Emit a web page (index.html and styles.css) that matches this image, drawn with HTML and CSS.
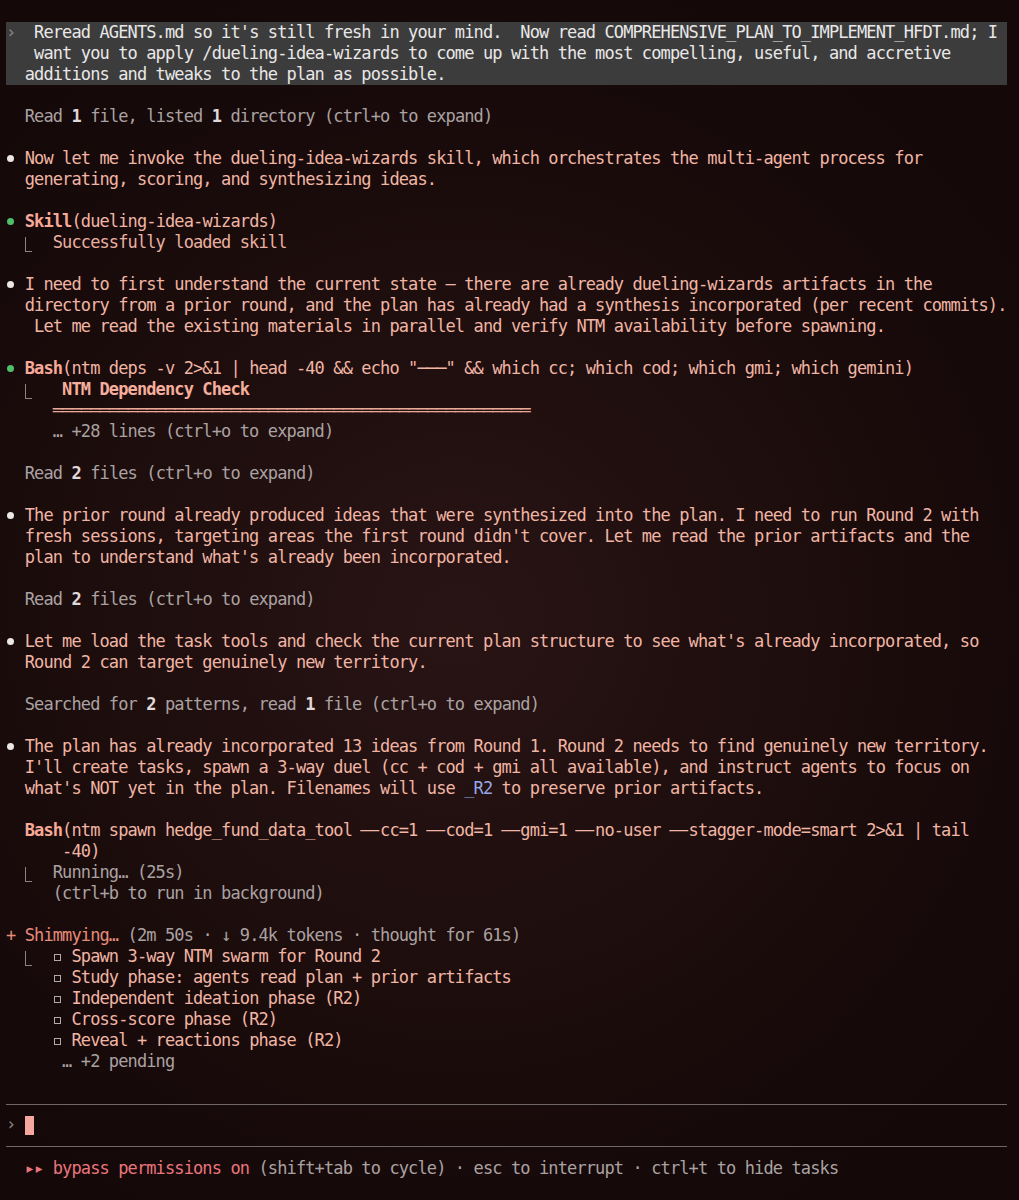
FILE: index.html
```html
<!DOCTYPE html>
<html lang="en">
<head>
<meta charset="utf-8">
<title>Terminal</title>
<link rel="stylesheet" href="styles.css">
</head>
<body>
<main class="term">
  <section class="user">
    <div class="row"><span class="prompt">›</span>  Reread AGENTS.md so it's still fresh in your mind.  Now read COMPREHENSIVE_PLAN_TO_IMPLEMENT_HFDT.md; I</div>
    <div class="row">   want you to apply /dueling-idea-wizards to come up with the most compelling, useful, and accretive</div>
    <div class="row">  additions and tweaks to the plan as possible.</div>
  </section>
  <div class="row"></div>
  <div class="row dim">  Read <b>1</b> file, listed <b>1</b> directory (ctrl+o to expand)</div>
  <div class="row"></div>
  <div class="row peach"><span class="dot"></span> Now let me invoke the dueling-idea-wizards skill, which orchestrates the multi-agent process for</div>
  <div class="row peach">  generating, scoring, and synthesizing ideas.</div>
  <div class="row"></div>
  <div class="row peach"><span class="dot ok"></span> <span class="tool">Skill</span>(dueling-idea-wizards)</div>
  <div class="row result">  <span class="corner"></span>  Successfully loaded skill</div>
  <div class="row"></div>
  <div class="row peach"><span class="dot"></span> I need to first understand the current state — there are already dueling-wizards artifacts in the</div>
  <div class="row peach">  directory from a prior round, and the plan has already had a synthesis incorporated (per recent commits).</div>
  <div class="row peach">   Let me read the existing materials in parallel and verify NTM availability before spawning.</div>
  <div class="row"></div>
  <div class="row peach"><span class="dot ok"></span> <span class="tool">Bash</span>(ntm deps -v 2&gt;&amp;1 | head -40 &amp;&amp; echo "───" &amp;&amp; which cc; which cod; which gmi; which gemini)</div>
  <div class="row result">  <span class="corner"></span>   <span class="heading">NTM Dependency Check</span></div>
  <div class="row result">     <span class="dbl">═══════════════════════════════════════════════════</span></div>
  <div class="row dim">     … +28 lines (ctrl+o to expand)</div>
  <div class="row"></div>
  <div class="row dim">  Read <b>2</b> files (ctrl+o to expand)</div>
  <div class="row"></div>
  <div class="row peach"><span class="dot"></span> The prior round already produced ideas that were synthesized into the plan. I need to run Round 2 with</div>
  <div class="row peach">  fresh sessions, targeting areas the first round didn't cover. Let me read the prior artifacts and the</div>
  <div class="row peach">  plan to understand what's already been incorporated.</div>
  <div class="row"></div>
  <div class="row dim">  Read <b>2</b> files (ctrl+o to expand)</div>
  <div class="row"></div>
  <div class="row peach"><span class="dot"></span> Let me load the task tools and check the current plan structure to see what's already incorporated, so</div>
  <div class="row peach">  Round 2 can target genuinely new territory.</div>
  <div class="row"></div>
  <div class="row dim">  Searched for <b>2</b> patterns, read <b>1</b> file (ctrl+o to expand)</div>
  <div class="row"></div>
  <div class="row peach"><span class="dot"></span> The plan has already incorporated 13 ideas from Round 1. Round 2 needs to find genuinely new territory.</div>
  <div class="row peach">  I'll create tasks, spawn a 3-way duel (cc + cod + gmi all available), and instruct agents to focus on</div>
  <div class="row peach">  what's NOT yet in the plan. Filenames will use <span class="blue">_R2</span> to preserve prior artifacts.</div>
  <div class="row"></div>
  <div class="row peach">  <span class="tool">Bash</span>(ntm spawn hedge_fund_data_tool <span class="lig">—</span>cc=1 <span class="lig">—</span>cod=1 <span class="lig">—</span>gmi=1 <span class="lig">—</span>no-user <span class="lig">—</span>stagger-mode=smart 2&gt;&amp;1 | tail</div>
  <div class="row peach">      -40)</div>
  <div class="row dim">  <span class="corner"></span>  Running… (25s)</div>
  <div class="row dim">     (ctrl+b to run in background)</div>
  <div class="row"></div>
  <div class="row dim"><span class="spin">+ Shimmying…</span> (2m 50s · ↓ 9.4k tokens · thought for 61s)</div>
  <div class="row peach">  <span class="corner"></span>  <span class="box"></span> Spawn 3-way NTM swarm for Round 2</div>
  <div class="row peach">     <span class="box"></span> Study phase: agents read plan + prior artifacts</div>
  <div class="row peach">     <span class="box"></span> Independent ideation phase (R2)</div>
  <div class="row peach">     <span class="box"></span> Cross-score phase (R2)</div>
  <div class="row peach">     <span class="box"></span> Reveal + reactions phase (R2)</div>
  <div class="row dim">      … +2 pending</div>
  <div class="row"></div>
  <div class="row rule"></div>
  <div class="row input"><span class="prompt">›</span> <span class="cursor"></span></div>
  <div class="row rule"></div>
  <div class="row dim bottom">  <span class="mode">▸▸ bypass permissions on</span> (shift+tab to cycle) · esc to interrupt · ctrl+t to hide tasks</div>
</main>
</body>
</html>
```
FILE: styles.css
```css
html, body {
  margin: 0;
  padding: 0;
}

body {
  width: 1019px;
  min-height: 1200px;
  background:
    radial-gradient(ellipse 65% 55% at 45% 52%, #291414 0%, #1d0d0d 55%, #140808 100%);
  background-color: #150909;
  font-family: "DejaVu Sans Mono", "Liberation Mono", monospace;
  font-size: 17px;
  letter-spacing: -0.884px;
  color: #f0b5a4;
}

.term {
  width: 1001px;
  padding: 22px 0 0 6px;
}

.row {
  height: 21px;
  line-height: 21px;
  white-space: pre;
}

.user {
  background: #3d3c3c;
  color: #e8e8e8;
}

.prompt {
  color: #8b8686;
}

.peach {
  color: #f0b5a4;
}

.result {
  color: #e9b0a1;
}

.dim {
  color: #aaa2a2;
}

.dim b {
  color: #e0d9d9;
  font-weight: bold;
}

.dot {
  display: inline-block;
  width: 7px;
  height: 7px;
  margin: 0 1.35px 0 1px;
  border-radius: 50%;
  background: #ebe7e7;
  vertical-align: 2px;
}

.dot.ok {
  background: #4fbf6a;
}

.tool {
  font-weight: bold;
  color: #f7a998;
}

.heading {
  font-weight: bold;
  color: #f5ae9c;
}

.corner {
  display: inline-block;
  width: 7px;
  height: 15px;
  margin-right: 2.35px;
  border-left: 1.5px solid #8c8282;
  border-bottom: 1.5px solid #8c8282;
  box-sizing: border-box;
  vertical-align: -4px;
}

.dbl {
  color: #eaa998;
}

.lig {
  display: inline-block;
  width: 18.7px;
  text-align: left;
  transform: scaleX(1.85);
  transform-origin: 1px 50%;
}

.blue {
  color: #95a8e8;
}

.spin {
  color: #e68c7a;
}

.box {
  display: inline-block;
  width: 7px;
  height: 7px;
  margin: 0 1.35px 0 1px;
  border: 1.5px solid #b4a8a8;
  box-sizing: border-box;
  vertical-align: 1px;
}

.rule {
  background: linear-gradient(#706868, #706868) 0 11px / 100% 1px no-repeat;
}

.input {
  color: #a69f9f;
}

.cursor {
  display: inline-block;
  width: 9px;
  height: 19px;
  margin-top: 2px;
  background: #f5a79e;
  vertical-align: top;
}

.bottom {
  padding-top: 2px;
}

.mode {
  color: #e9767d;
}
```
